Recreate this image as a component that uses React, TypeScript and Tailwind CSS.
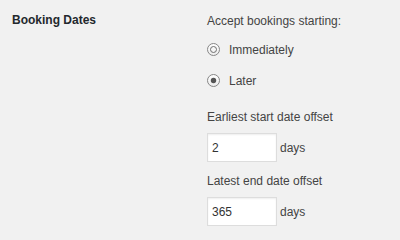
function Radio({ checked }: { checked: boolean }) {
  return (
    <svg width="13" height="13" viewBox="0 0 13 13" className="shrink-0">
      <defs>
        <linearGradient id={checked ? 'rg-on' : 'rg-off'} x1="0" y1="0" x2="0" y2="1">
          <stop offset="0" stopColor="#ffffff" />
          <stop offset="1" stopColor="#ececec" />
        </linearGradient>
      </defs>
      <circle
        cx="6.5"
        cy="6.5"
        r="6"
        fill={`url(#${checked ? 'rg-on' : 'rg-off'})`}
        stroke="#868686"
        strokeWidth="1"
      />
      {checked ? (
        <circle cx="6.5" cy="6.5" r="2.7" fill="#555555" />
      ) : (
        <circle cx="6.5" cy="6.5" r="3" fill="none" stroke="#6f6f6f" strokeWidth="1" />
      )}
    </svg>
  );
}

function OffsetField({ value }: { value: string }) {
  return (
    <div className="flex items-center gap-[3px]">
      <div className="w-[70px] h-[29px] border border-[#dddddd] bg-white shadow-[inset_0_1px_2px_rgba(0,0,0,0.07)] pl-[4px] flex items-center text-[#333333]">
        {value}
      </div>
      <span>days</span>
    </div>
  );
}

export default function App() {
  return (
    <div
      className="w-[400px] h-[240px] bg-[#f1f1f1] flex text-[12px] leading-[16px] text-[#444444]"
      style={{ fontFamily: '"Liberation Sans", Arial, sans-serif' }}
    >
      <div className="w-[207px] pl-[12px] pt-[12px]">
        <h3 className="font-bold text-[#23282d]">Booking Dates</h3>
      </div>

      <div className="flex flex-col pt-[13px]">
        <p>Accept bookings starting:</p>

        <div className="mt-[5px] flex flex-col">
          <label className="h-[31px] flex items-center gap-[9px]">
            <Radio checked={false} />
            <span>Immediately</span>
          </label>
          <label className="h-[31px] flex items-center gap-[9px]">
            <Radio checked={true} />
            <span>Later</span>
          </label>
        </div>

        <p className="mt-[13px]">Earliest start date offset</p>
        <div className="mt-[8px]">
          <OffsetField value="2" />
        </div>

        <p className="mt-[11px]">Latest end date offset</p>
        <div className="mt-[8px]">
          <OffsetField value="365" />
        </div>
      </div>
    </div>
  );
}
